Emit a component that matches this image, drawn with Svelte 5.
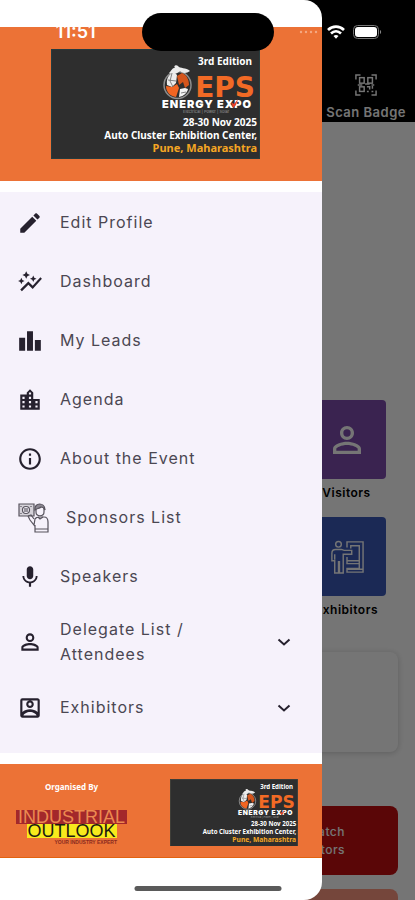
<script>
  const menu = [
    { id: 'edit-profile', label: 'Edit Profile' },
    { id: 'dashboard', label: 'Dashboard' },
    { id: 'my-leads', label: 'My Leads' },
    { id: 'agenda', label: 'Agenda' },
    { id: 'about', label: 'About the Event' },
    { id: 'sponsors', label: 'Sponsors List' },
    { id: 'speakers', label: 'Speakers' },
    { id: 'delegates', label: 'Delegate List / Attendees', expandable: true },
    { id: 'exhibitors', label: 'Exhibitors', expandable: true },
  ];

  // Filled 24px glyphs, keyed by menu id
  const icons = {
    'edit-profile':
      'M3 17.25V21h3.75L17.81 9.94l-3.75-3.75L3 17.25zM20.71 7.04c.39-.39.39-1.02 0-1.41l-2.34-2.34c-.39-.39-1.02-.39-1.41 0l-1.83 1.83 3.75 3.75 1.83-1.83z',
    dashboard:
      'M14.06 9.94L12 9l2.06-.94L15 6l.94 2.06L18 9l-2.06.94L15 12l-.94-2.06zM4 14l.94-2.06L7 11l-2.06-.94L4 8l-.94 2.06L1 11l2.06.94L4 14zm4.5-5l1.09-2.41L12 5.5 9.59 4.41 8.5 2 7.41 4.41 5 5.5l2.41 1.09L8.5 9zm-4 11.5l6-6.01 4 4L23 8.93l-1.41-1.41-7.09 7.97-4-4L3 19l1.5 1.5z',
    'my-leads': 'M7.5 21H2V9h5.5v12zm7.25-18h-5.5v18h5.5V3zM22 11h-5.5v10H22V11z',
    agenda:
      'M15 11V5l-3-3-3 3v2H3v14h18V11h-6zm-8 8H5v-2h2v2zm0-4H5v-2h2v2zm0-4H5V9h2v2zm6 8h-2v-2h2v2zm0-4h-2v-2h2v2zm0-4h-2V9h2v2zm0-4h-2V5h2v2zm6 12h-2v-2h2v2zm0-4h-2v-2h2v2z',
    about:
      'M11 7h2v2h-2zm0 4h2v6h-2zm1-9C6.48 2 2 6.48 2 12s4.48 10 10 10 10-4.48 10-10S17.52 2 12 2zm0 18c-4.41 0-8-3.59-8-8s3.59-8 8-8 8 3.59 8 8-3.59 8-8 8z',
    speakers:
      'M12 14c1.66 0 2.99-1.34 2.99-3L15 5c0-1.66-1.34-3-3-3S9 3.34 9 5v6c0 1.66 1.34 3 3 3zm5.3-3c0 3-2.54 5.1-5.3 5.1S6.7 14 6.7 11H5c0 3.41 2.72 6.23 6 6.72V21h2v-3.28c3.28-.48 6-3.3 6-6.72h-1.7z',
    delegates:
      'M12 5.9a2.1 2.1 0 1 1 0 4.2 2.1 2.1 0 0 1 0-4.2m0 9c2.97 0 6.1 1.46 6.1 2.1v1.1H5.9V17c0-.64 3.13-2.1 6.1-2.1M12 4C9.79 4 8 5.79 8 8s1.79 4 4 4 4-1.79 4-4-1.79-4-4-4zm0 9c-2.67 0-8 1.34-8 4v3h16v-3c0-2.66-5.33-4-8-4z',
    exhibitors:
      'M19 3H5a2 2 0 0 0-2 2v14c0 1.1.9 2 2 2h14c1.1 0 2-.9 2-2V5c0-1.1-.9-2-2-2zm0 2v10.8C17.2 14.1 14.7 13.2 12 13.2S6.800 14.1 5 15.8V5h14zM12 12c1.93 0 3.5-1.57 3.5-3.5S13.93 5 12 5 8.500 6.570 8.500 8.500 10.070 12 12 12zm0-5c.83 0 1.500.67 1.500 1.500S12.830 10 12 10s-1.500-.67-1.500-1.500S11.170 7 12 7zM6 19c.3-1.500 3-3.200 6-3.200s5.700 1.700 6 3.200H6z',
  };

  let open = $state({});
</script>

<svelte:head>
  <title>Energy Expo</title>
</svelte:head>

{#snippet banner()}
  <svg class="banner" viewBox="0 0 209 110">
    <rect x="0.5" y="0.5" width="208" height="109" fill="#2e2e2e" stroke="#253b3e" />
    <text class="noto" x="201" y="16" font-size="10">3rd Edition</text>

    <!-- globe -->
    <circle cx="126.5" cy="36" r="13.5" fill="#2e2e2e" stroke="#8d8d8d" stroke-width="1.5" />
    <path d="M116 36c-1-7 2-11 7-13l3 3-1 8-4 4z" fill="#ececec" />
    <path d="M115 37l6 1 5-3 2 4-3 9c-6-1-10-5-10-11z" fill="#f26522" />
    <path d="M126 27l5-3c5 2 7 7 7 12l-4 3-2-6-4 3z" fill="#d4551c" />
    <path d="M129 40l5-1 3 1c-1 4-4 7-9 8z" fill="#f4f4f4" />
    <path d="M118 24c3-3 3-5 6-5-2-2 1-4 3-2 2 3 8 1 12 5-4 3-8 2-10 0-3 3-7 4-11 2z" fill="#ececec" />
    <path d="M121 24l-2 8 3 6M117 31l8 1M130 44l5-1" fill="none" stroke="#666" stroke-width="0.8" />

    <text class="eps" x="204" y="48">EPS</text>
    <text class="expo" x="111" y="59">ENERGY EXPO</text>
    <path d="M180 53l3 2 4-5-2 6-3 3z" fill="#e8402a" />
    <text class="sub" x="132" y="64">Electrical | Power | Solar</text>

    <text class="noto" x="206" y="77" font-size="10">28-30 Nov 2025</text>
    <text class="noto" x="206" y="90" font-size="10">Auto Cluster Exhibition Center,</text>
    <text class="noto city" x="206" y="103" font-size="11">Pune, Maharashtra</text>
  </svg>
{/snippet}

{#snippet row(item)}
  {#if item.id === 'sponsors'}
    <svg class="icon wide" viewBox="0 0 32 32" fill="none" stroke="#57535d" stroke-width="1.2">
      <path d="M2 2h15v12H2z" fill="#d5d2d9" />
      <circle cx="9" cy="8" r="3.5" fill="#f6f2fb" />
      <path d="M8 6v4M10 6v4M4 4v1M4 11v1M14 4v1" />
      <path d="M19 7v3c0 5 8 5 8 0V6" fill="#f6f2fb" />
      <path d="M18 8c-1-8 10-8 10 0-1-2-2-3-4-3-2 2-4 1-6 3z" fill="#8c8892" />
      <path d="M11 14l2 4 4 5 1-6c1-2 3-2 5-2h4c3 0 4 2 4 5v10H18v-7" fill="#f6f2fb" />
      <path d="M11 14l3-1 3 4M18 27h13M21 15l2 2 3-2" />
    </svg>
  {:else}
    <svg class="icon" viewBox="0 0 24 24" fill="#26212e"><path d={icons[item.id]} /></svg>
  {/if}
  <span class="label">{item.label}</span>
{/snippet}

<div class="phone">
  <main class="home">
    <header class="topbar">
      <button class="scan">
        <svg viewBox="0 0 24 24" fill="none" stroke="#fff" stroke-width="1.6">
          <path d="M1 6V1h5M18 1h5v5M23 18v5h-5M6 23H1v-5" />
          <rect x="5" y="4" width="5" height="6" />
          <rect x="14" y="4" width="5" height="6" />
          <rect x="5" y="14" width="5" height="5" />
          <path d="M13 14h3v3M19 13v3M13 19h2M18 19h2M3 12h5M11 11h5M18 12h3" />
        </svg>
        Scan Badge
      </button>
    </header>

    <section class="tiles">
      <button class="tile">
        <span class="square visitors">
          <svg viewBox="0 0 24 24" fill="#fff"><path d={icons.delegates} /></svg>
        </span>
        Visitors
      </button>
      <button class="tile">
        <span class="square booths">
          <svg viewBox="0 0 36 36" fill="none" stroke="#fff" stroke-width="1.5">
            <circle cx="9" cy="4.5" r="3" />
            <path d="M6 10h6l3 1h8v4h-9v20h-4V23H9v12H5V22H2v-8c0-3 2-4 4-4zM5 15v6" />
            <path d="M18 8V2h17v32H18v-4h13V6H22v3M18 18v7h13M18 22h13M18 31h17" />
          </svg>
        </span>
        Exhibitors
      </button>
    </section>

    <section class="card"></section>

    <section class="actions">
      <button class="action match">Match<br />Visitors</button>
      <button class="action more" aria-label="More"></button>
    </section>
  </main>

  <div class="scrim"></div>

  <aside class="drawer">
    <div class="hero">{@render banner()}</div>

    <nav class="menu">
      {#each menu as item}
        {#if item.expandable}
          <button
            class="row tall"
            aria-expanded={!!open[item.id]}
            onclick={() => (open[item.id] = !open[item.id])}
          >
            {@render row(item)}
            <svg class="chevron" viewBox="0 0 24 24" fill="none" stroke="#26212e" stroke-width="2">
              <path d="M6.5 9.5l5.5 5 5.5-5" />
            </svg>
          </button>
        {:else}
          <a class="row" href="#{item.id}">{@render row(item)}</a>
        {/if}
      {/each}
    </nav>

    <footer class="organiser">
      <div class="credit">
        <span class="by">Organised By</span>
        <div class="logo">
          <span class="industrial">INDUSTRIAL</span>
          <span class="outlook">OUTLOOK</span>
          <span class="tagline">YOUR INDUSTRY EXPERT</span>
        </div>
      </div>
      <div class="small-banner">{@render banner()}</div>
    </footer>
  </aside>

  <div class="status">
    <span class="time">11:51</span>
    <span class="island"></span>
    <div class="signals">
      <svg width="20" height="4" viewBox="0 0 20 4" fill="#f4a883">
        <circle cx="2" cy="2" r="1.2" /><circle cx="7" cy="2" r="1.2" />
        <circle cx="12" cy="2" r="1.2" /><circle cx="17" cy="2" r="1.2" />
      </svg>
      <svg width="18" height="14" viewBox="0 0 18 14" fill="none" stroke="#fff" stroke-width="2.6">
        <path d="M1 5c4.500-4.500 11.500-4.500 16 0M4 8.500c3-3 7-3 10 0" />
        <path d="M6.500 11c1.500-1.300 3.500-1.300 5 0L9 13.700z" fill="#fff" stroke="none" />
      </svg>
      <svg width="29" height="14" viewBox="0 0 29 14">
        <rect x="0.5" y="0.5" width="25" height="13" rx="4" fill="none" stroke="#777" />
        <rect x="2" y="2" width="22" height="10" rx="3" fill="#fff" />
        <path d="M27 5c1.500.5 1.500 3.500 0 4z" fill="#888" />
      </svg>
    </div>
  </div>
  <div class="home-bar"></div>
</div>

<style>
  :global(body) {
    margin: 0;
    background: #000;
  }

  .phone {
    position: relative;
    height: 100vh;
    overflow: hidden;
    background: #fff;
    font-family: Inter, 'Liberation Sans', sans-serif;
  }

  button {
    border: 0;
    padding: 0;
    background: none;
    font: inherit;
    color: inherit;
    cursor: pointer;
  }

  /* Home screen behind the drawer */
  .home {
    display: flex;
    flex-direction: column;
  }

  .topbar {
    display: flex;
    justify-content: flex-end;
    padding: 74px 9px 0 0;
    height: 48px;
    background: #000;
  }

  .scan {
    display: flex;
    flex-direction: column;
    align-items: center;
    gap: 8px;
    color: #fff;
    font-size: 13px;
    line-height: 16px;
    font-weight: 600;
    letter-spacing: 0.5px;
  }

  .scan svg {
    width: 22px;
    height: 22px;
  }

  .tiles {
    display: flex;
    flex-direction: column;
    align-items: flex-end;
    gap: 16px;
    padding: 278px 29px 0 0;
  }

  .tile {
    display: flex;
    flex-direction: column;
    align-items: center;
    gap: 6px;
    width: 79px;
    font-size: 12px;
    line-height: 16px;
    font-weight: 600;
    letter-spacing: 0.5px;
  }

  .square {
    display: grid;
    place-items: center;
    width: 79px;
    height: 79px;
    border-radius: 4px;
  }

  .square svg {
    width: 42px;
    height: 42px;
  }

  .square.booths svg {
    width: 34px;
    height: 34px;
  }

  .visitors {
    background: #7e4cae;
  }

  .booths {
    background: #3b5bb9;
  }

  .card {
    height: 100px;
    margin: 34px 17px 0;
    border-radius: 8px;
    background: #fff;
    box-shadow: 0 1px 6px rgba(0, 0, 0, 0.2);
  }

  .actions {
    display: flex;
    flex-direction: column;
    align-items: flex-end;
    gap: 14px;
    margin: 54px 17px 0;
  }

  .action {
    width: 42%;
    height: 69px;
    padding-right: 53px;
    border-radius: 8px;
    color: #fff;
    font-size: 12px;
    line-height: 18px;
    font-weight: 500;
    letter-spacing: 0.5px;
    text-align: right;
  }

  .match {
    background: #c40f11;
  }

  .more {
    background: #ff9882;
  }

  .scrim {
    position: absolute;
    inset: 0;
    background: rgba(0, 0, 0, 0.54);
  }

  /* Drawer */
  .drawer {
    position: absolute;
    top: 0;
    left: 0;
    box-sizing: border-box;
    width: 77.6%;
    height: 100%;
    padding-top: 27px;
    overflow: hidden;
    border-radius: 0 18px 18px 0;
    background: #fff;
  }

  .hero {
    padding: 22px 62px 22px 51px;
    background: #ec7236;
  }

  .banner {
    display: block;
    width: 100%;
  }

  .noto {
    font-family: 'Noto Sans', 'Open Sans', sans-serif;
    font-weight: 700;
    fill: #fff;
    text-anchor: end;
  }

  .city {
    fill: #f5a623;
  }

  .eps {
    font-family: 'DejaVu Sans', sans-serif;
    font-size: 28px;
    font-weight: 700;
    fill: #f26a25;
    text-anchor: end;
  }

  .expo {
    font-size: 11px;
    font-weight: 900;
    letter-spacing: 1px;
    fill: #fff;
  }

  .sub {
    font-size: 4px;
    fill: #999;
  }

  .menu {
    display: flex;
    flex-direction: column;
    margin: 11px 0;
    padding: 1px 0 16px;
    background: #f6f2fb;
  }

  .row {
    display: flex;
    align-items: center;
    gap: 17px;
    box-sizing: border-box;
    min-height: 59px;
    padding: 0 26px 0 17px;
    color: #4b4752;
    font-size: 16px;
    line-height: 25px;
    letter-spacing: 1px;
    text-align: left;
    text-decoration: none;
  }

  .row.tall {
    padding-top: 11px;
    padding-bottom: 11px;
  }

  .icon {
    flex: none;
    width: 26px;
    height: 26px;
  }

  .icon.wide {
    width: 32px;
    height: 32px;
  }

  .label {
    flex: 1;
    max-width: 150px;
  }

  .chevron {
    width: 24px;
    height: 24px;
    margin-left: auto;
  }

  .organiser {
    display: flex;
    justify-content: space-between;
    padding: 15px 24px 11px 16px;
    background: #ec7236;
    border-bottom: 1px solid #e2620f;
  }

  .credit {
    display: flex;
    flex-direction: column;
    align-items: center;
    gap: 15px;
  }

  .by {
    color: #fff;
    font: 700 8px/16px 'Noto Sans', sans-serif;
  }

  .logo {
    display: flex;
    flex-direction: column;
    align-items: center;
    font-family: 'Liberation Sans', sans-serif;
  }

  .industrial {
    padding: 0 2px;
    background: #a3282b;
    color: #ec8a50;
    font-size: 18px;
    line-height: 14px;
  }

  .outlook {
    padding: 0 1px;
    background: #f7ea1c;
    color: #1c1a10;
    font-size: 18px;
    line-height: 14px;
  }

  .tagline {
    align-self: flex-end;
    padding-right: 10px;
    color: #8a2a20;
    font-size: 5px;
    line-height: 8px;
    font-weight: 700;
  }

  .small-banner {
    width: 128px;
  }

  /* Device chrome on top of everything */
  .status {
    position: absolute;
    top: 13px;
    left: 0;
    right: 0;
    display: grid;
    grid-template-columns: 1fr 132px 1fr;
    align-items: center;
    color: #fff;
    pointer-events: none;
  }

  .time {
    padding-left: 10px;
    font-size: 18px;
    line-height: 20px;
    font-weight: 600;
    text-align: center;
  }

  .island {
    height: 38px;
    border-radius: 19px;
    background: #000;
  }

  .signals {
    display: flex;
    align-items: center;
    justify-content: flex-end;
    gap: 8px;
    padding-right: 33px;
  }

  .home-bar {
    position: absolute;
    bottom: 9px;
    left: 50%;
    width: 147px;
    height: 5px;
    border-radius: 3px;
    background: #5a5a5a;
    transform: translateX(-50%);
  }
</style>
